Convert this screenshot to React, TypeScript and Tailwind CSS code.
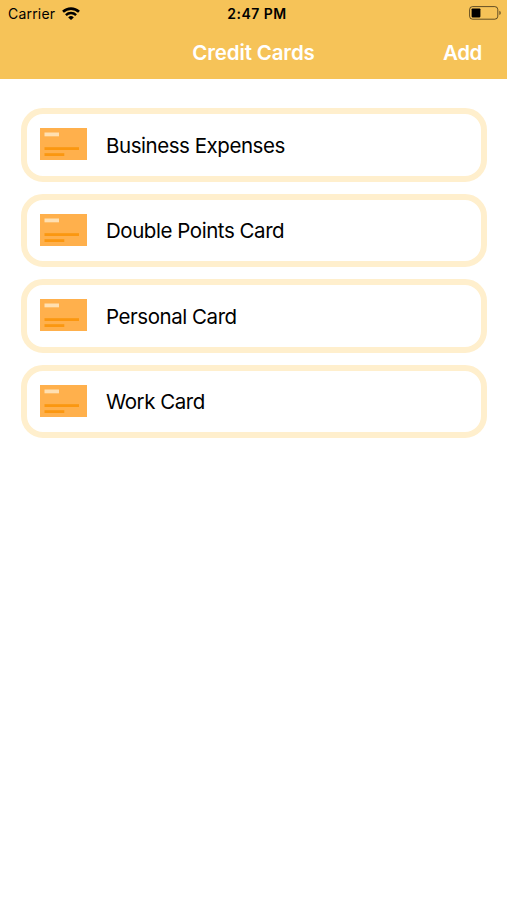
const cards = ["Business Expenses", "Double Points Card", "Personal Card", "Work Card"];

const WifiIcon = () => (
  <svg width="18" height="14" viewBox="0 0 18 14" fill="none" stroke="black">
    <path d="M1 4.8a11.6 11.6 0 0 1 16 0" strokeWidth="2.6" />
    <path d="M3.9 8.1a7.3 7.3 0 0 1 10.2 0" strokeWidth="2.4" />
    <path d="M9 13 6.2 10.4a4 4 0 0 1 5.6 0Z" fill="black" stroke="none" />
  </svg>
);

const BatteryIcon = () => (
  <svg width="33" height="14" viewBox="0 0 33 14">
    <rect x="0.6" y="0.6" width="28.2" height="12.6" rx="3" fill="none" stroke="black" strokeOpacity="0.6" />
    <rect x="2.6" y="2.4" width="8.8" height="9" rx="0.8" fill="black" />
    <path d="M30.4 4.7c1.8.7 1.8 3.6 0 4.3Z" fill="black" fillOpacity="0.6" />
  </svg>
);

const CardIcon = () => (
  <svg width="47" height="32" viewBox="0 0 47 32" className="mb-px">
    <rect width="47" height="32" fill="#ffb04c" />
    <rect x="4.5" y="4.5" width="14.5" height="3.8" fill="#ffe0b2" />
    <rect x="4.5" y="19.2" width="34.5" height="2.8" fill="#fb9710" />
    <rect x="4.5" y="25.2" width="19.8" height="2.8" fill="#fb9710" />
  </svg>
);

const StatusBar = () => (
  <div className="grid h-[27px] grid-cols-3 items-center pl-2 pr-[5px] text-[14px] text-black">
    <div className="flex items-center gap-[7px]">
      <span className="tracking-[0.2px]">Carrier</span>
      <WifiIcon />
    </div>
    <span className="pl-1 text-center font-semibold tracking-[0.5px]">2:47 PM</span>
    <div className="flex justify-end pb-px">
      <BatteryIcon />
    </div>
  </div>
);

const App = () => {
  return (
    <div className="min-h-screen bg-white font-['Inter',sans-serif]">
      <header className="h-[79px] bg-[#f6c358]">
        <StatusBar />
        <div className="grid h-[52px] grid-cols-3 items-center px-[25px] text-[20.5px] text-white">
          <h1 className="col-start-2 whitespace-nowrap text-center font-semibold tracking-[-0.15px]">Credit Cards</h1>
          <button className="justify-self-end font-semibold tracking-[-0.4px]">Add</button>
        </div>
      </header>

      <ul className="flex flex-col gap-3 pl-[20.5px] pr-5 pt-[29px]">
        {cards.map((name) => (
          <li key={name} className="flex h-[73.5px] items-center rounded-[22px] border-6 border-[#ffefcd] pl-[13.5px]">
            <CardIcon />
            <span className="pl-[19px] pt-[3px] text-[20.5px] tracking-[-0.45px] text-black">{name}</span>
          </li>
        ))}
      </ul>
    </div>
  );
};

export default App;
